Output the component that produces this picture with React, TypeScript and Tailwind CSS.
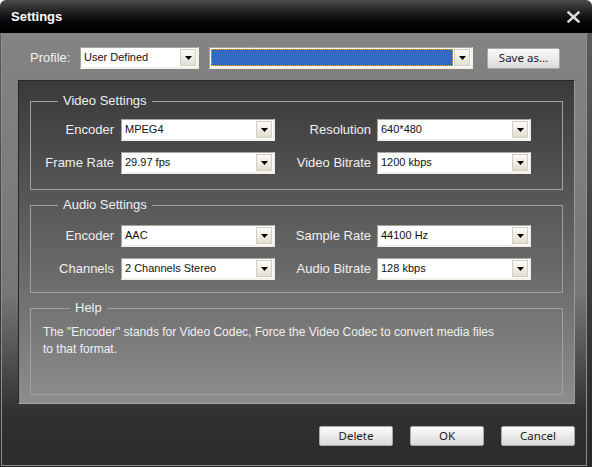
import React from "react";

const Arrow = () => (
  <svg width="7" height="4" viewBox="0 0 7 4">
    <path d="M0 0h7L3.5 4z" fill="#000" />
  </svg>
);

const DropBtn = () => (
  <div className="flex h-full w-[16px] shrink-0 items-center justify-center border border-[#d2cfc1] bg-gradient-to-b from-[#fcfbf8] to-[#e2dfd1]">
    <Arrow />
  </div>
);

function Select({ value, w }: { value: string; w: string }) {
  return (
    <div
      className={`flex h-[22px] ${w} border-t border-l border-r-2 border-b-2 border-t-[#a7a59c] border-l-[#a7a59c] border-r-[#f1efe6] border-b-[#f1efe6] bg-white py-[1px] pr-[1px]`}
    >
      <span className="flex-1 pl-[3px] text-[11px] leading-[17px] text-[#111]">{value}</span>
      <DropBtn />
    </div>
  );
}

function Btn({ label, w }: { label: string; w: string }) {
  return (
    <button
      className={`h-[20px] ${w} rounded-[2px] border border-[#a9a9a9] bg-gradient-to-b from-[#fbfbfb] to-[#dadada] font-['Noto_Sans',sans-serif] text-[11.5px] leading-none text-[#1b1b1b]`}
    >
      {label}
    </button>
  );
}

function Row({ l1, v1, l2, v2 }: { l1: string; v1: string; l2: string; v2: string }) {
  return (
    <div className="flex items-center">
      <span className="w-[83px] text-right text-[13px] text-[#f0f0f0]">{l1}</span>
      <div className="ml-[7px]">
        <Select value={v1} w="w-[154px]" />
      </div>
      <span className="w-[96px] text-right text-[13px] text-[#f0f0f0]">{l2}</span>
      <div className="ml-[6px]">
        <Select value={v2} w="w-[154px]" />
      </div>
    </div>
  );
}

export default function App() {
  return (
    <div className="flex h-[467px] w-[592px] flex-col bg-white font-['Liberation_Sans',Arial,sans-serif]">
      <div className="flex h-[33px] shrink-0 items-center justify-between rounded-t-[6px] bg-gradient-to-b from-[#4a4a4a] via-[#0f0f0f] via-55% to-black pl-[11px] pr-[12px]">
        <span className="text-[13px] font-bold text-white">Settings</span>
        <svg width="13" height="12" viewBox="0 0 13 12">
          <path d="M1.5 1.5l10 9M11.5 1.5l-10 9" stroke="#dedede" strokeWidth="2.4" strokeLinecap="square" />
        </svg>
      </div>
      <div className="flex flex-1 bg-gradient-to-b from-[#5c5c5c] to-[#262626] pb-[1px] pl-[1px] pr-[5px]">
        <div className="flex flex-1 flex-col border-x border-b border-[#8f8f8f] bg-[linear-gradient(to_bottom,#838383_0%,#777777_60%,#313131_88%,#2c2c2c_100%)]">
          <div className="mt-[14px] flex h-[22px] items-center pl-[28px]">
            <span className="w-[50px] text-[13px] text-[#f2f2f2]">Profile:</span>
            <Select value="User Defined" w="w-[119px]" />
            <div className="ml-[10px] flex h-[22px] w-[264px] border-t border-l border-r-2 border-b-2 border-t-[#a7a59c] border-l-[#a7a59c] border-r-[#f1efe6] border-b-[#f1efe6] bg-white py-[1px] pr-[1px] pl-[1px]">
              <div className="mr-[1px] flex-1 border border-dotted border-[#e0b45a] bg-[#316ac5]" />
              <DropBtn />
            </div>
            <div className="ml-[14px] flex">
              <button className="h-[21px] w-[73px] rounded-[2px] border border-[#a9a9a9] bg-gradient-to-b from-[#fbfbfb] to-[#dadada] font-['Noto_Sans',sans-serif] text-[11.5px] leading-none text-[#1b1b1b]">
                Save as...
              </button>
            </div>
          </div>

          <div className="ml-[16px] mt-[11px] flex h-[324px] w-[557px] flex-col border border-t-[#262626] border-l-[#262626] border-r-[#9b9b9b] border-b-[#a6a6a6] bg-gradient-to-b from-[#3a3a3a] to-[#8d8d8d] px-[11px] pt-[12px]">
            <fieldset className="border border-[#a0a0a0] pb-[15px] pt-[10px]">
              <legend className="ml-[27px] px-[5px] text-[13px] leading-[16px] text-[#f0f0f0]">Video Settings</legend>
              <div className="flex flex-col gap-[11px]">
                <Row l1="Encoder" v1="MPEG4" l2="Resolution" v2="640*480" />
                <Row l1="Frame Rate" v1="29.97 fps" l2="Video Bitrate" v2="1200 kbps" />
              </div>
            </fieldset>
            <fieldset className="mt-[7px] border border-[#a0a0a0] pb-[12px] pt-[12px]">
              <legend className="ml-[27px] px-[5px] text-[13px] leading-[16px] text-[#f0f0f0]">Audio Settings</legend>
              <div className="flex flex-col gap-[11px]">
                <Row l1="Encoder" v1="AAC" l2="Sample Rate" v2="44100 Hz" />
                <Row l1="Channels" v1="2 Channels Stereo" l2="Audio Bitrate" v2="128 kbps" />
              </div>
            </fieldset>
            <fieldset className="mt-[7px] h-[95px] border border-[#a0a0a0] pl-[12px] pt-[8px]">
              <legend className="ml-[27px] px-[5px] text-[13px] leading-[16px] text-[#f0f0f0]">Help</legend>
              <p className="text-[12px] leading-[17px] text-[#f0f0f0]">
                The "Encoder" stands for Video Codec, Force the Video Codec to convert media files
                <br />
                to that format.
              </p>
            </fieldset>
          </div>

          <div className="mt-[22px] flex justify-end gap-[17px] pr-[11px]">
            <Btn label="Delete" w="w-[74px]" />
            <Btn label="OK" w="w-[74px]" />
            <Btn label="Cancel" w="w-[74px]" />
          </div>
        </div>
      </div>
    </div>
  );
}
